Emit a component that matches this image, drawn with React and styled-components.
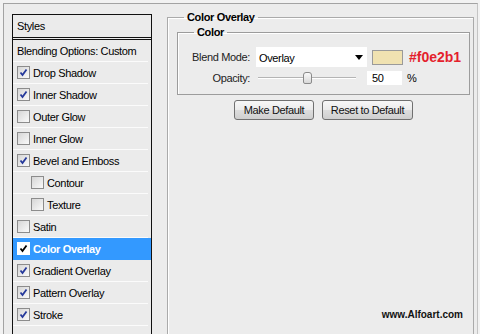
import styled, { createGlobalStyle } from "styled-components";

const GlobalStyle = createGlobalStyle`
    html, body {
        margin: 0;
        padding: 0;
        background: #f2f2f2;
        font-family: "Liberation Sans", Arial, sans-serif;
        font-size: 11px;
        letter-spacing: -0.35px;
        color: #000;
    }
`

let Dialog = styled.div`
    position: relative;
    margin: 3px 0 0 3px;
    width: 475px;
    height: 331px;
    box-sizing: border-box;
    border-top: 1px solid #a3a3a3;
    border-left: 1px solid #a3a3a3;
    border-right: 1px solid #c4c4c4;
    background: #ececec;
    display: flex;
    align-items: flex-start;
    overflow: hidden;
`

let StylePanel = styled.div`
    margin: 10px 0 0 8px;
    width: 140px;
    height: 340px;
    box-sizing: border-box;
    border: 1px solid #111;
    background: #ebebeb;
    flex-shrink: 0;
`

let PanelHeader = styled.div`
    height: 22px;
    line-height: 22px;
    padding-left: 4px;
    border-bottom: 3px double #111;
`

let Row = styled.div`
    display: flex;
    align-items: center;
    height: 21px;
    padding-left: ${p => p.$indent ? 18 : 4}px;
    border-bottom: 1px solid ${p => p.$active ? '#3399ff' : '#fbfbfb'};
    margin-right: ${p => p.$active ? 0 : 3}px;
    background: ${p => p.$active ? '#3399ff' : 'transparent'};
    color: ${p => p.$active ? '#fff' : '#000'};
    font-weight: ${p => p.$active ? 'bold' : 'normal'};
    white-space: nowrap;
`

let Box = styled.span`
    width: 11px;
    height: 11px;
    margin-right: 3px;
    border: 1px solid ${p => p.$active ? '#fff' : '#8c8c8c'};
    background: ${p => p.$active ? '#fff' : 'linear-gradient(135deg, #d6d6d6, #fafafa)'};
    display: inline-flex;
    align-items: center;
    justify-content: center;
    flex-shrink: 0;
`

let Settings = styled.fieldset`
    margin: 7px 3px 0 15px;
    padding: 0 3px 0 9px;
    flex: 1;
    height: 340px;
    border: 1px solid #aaa;
    box-shadow: inset 1px 1px 0 #fff;
    min-width: 0;
`

let Legend = styled.legend`
    margin-left: 7px;
    padding: 0 3px;
    font-weight: bold;
    line-height: 13px;
`

let ColorGroup = styled.fieldset`
    margin: 2px 0 0 0;
    padding: 8px 0 9px 0;
    border: 1px solid #9c9c9c;
    box-shadow: inset 1px 1px 0 #fff;
`

let SmallLegend = styled(Legend)`
    margin-left: 16px;
`

let FieldRow = styled.div`
    display: flex;
    align-items: center;
    height: ${p => p.$h}px;
    margin-top: ${p => p.$top || 0}px;
`

let Label = styled.label`
    width: 72px;
    text-align: right;
    margin-right: ${p => p.$gap}px;
    color: #222;
`

let Select = styled.div`
    width: 111px;
    height: 20px;
    box-sizing: border-box;
    background: #fff;
    display: flex;
    align-items: center;
    justify-content: space-between;
    padding: 1px 4px 0 3px;
`

let Arrow = styled.span`
    width: 0;
    height: 0;
    border-left: 4px solid transparent;
    border-right: 4px solid transparent;
    border-top: 5px solid #000;
`

let Swatch = styled.div`
    width: 29px;
    height: 13px;
    margin-left: 5px;
    border: 1px solid #9a9a9a;
    background: #f0e2b1;
`

let HexCode = styled.span`
    margin-left: 6px;
    color: #e41f2d;
    font-size: 14px;
    font-weight: bold;
    letter-spacing: 0;
`

let Slider = styled.div`
    position: relative;
    width: 98px;
    height: 14px;
    display: flex;
    align-items: center;
`

let Track = styled.div`
    width: 100%;
    height: 1px;
    background: #b4b4b4;
    border-bottom: 1px solid #fff;
`

let Thumb = styled.div`
    position: absolute;
    left: 45px;
    top: 1px;
    width: 9px;
    height: 12px;
    box-sizing: border-box;
    border: 1px solid #8a8a8a;
    border-radius: 3px 3px 2px 2px;
    background: linear-gradient(#fafafa, #d8d8d8);
`

let NumberBox = styled.div`
    width: 35px;
    height: 14px;
    margin-left: 11px;
    background: #fff;
    padding-left: 5px;
    box-sizing: border-box;
    line-height: 15px;
`

let Unit = styled.span`
    margin-left: 5px;
`

let Buttons = styled.div`
    display: flex;
    gap: 8px;
    margin: 5px 0 0 57px;
`

let Button = styled.button`
    width: ${p => p.$w}px;
    height: 20px;
    padding: 0;
    font-family: inherit;
    font-size: 11px;
    letter-spacing: -0.35px;
    color: #111;
    border: 1px solid #707070;
    border-radius: 3px;
    background: linear-gradient(#f7f7f7 0%, #ebebeb 50%, #dddddd 51%, #cfcfcf 100%);
`

let Watermark = styled.div`
    position: absolute;
    right: 14px;
    bottom: 14px;
    font-size: 10px;
    font-weight: bold;
    letter-spacing: 0;
    color: #111;
`

const effects = [
    { name: 'Drop Shadow', on: true },
    { name: 'Inner Shadow', on: true },
    { name: 'Outer Glow', on: false },
    { name: 'Inner Glow', on: false },
    { name: 'Bevel and Emboss', on: true },
    { name: 'Contour', on: false, sub: true },
    { name: 'Texture', on: false, sub: true },
    { name: 'Satin', on: false },
    { name: 'Color Overlay', on: true, active: true },
    { name: 'Gradient Overlay', on: true },
    { name: 'Pattern Overlay', on: true },
    { name: 'Stroke', on: true },
]

function Check({on, active}) {
    return (
        <Box $active={active}>
            {on ?
                <svg width="9" height="9" viewBox="0 0 9 9">
                    <path d="M1.5 4.5 L3.5 7 L7.5 1.5" fill="none" stroke={active ? '#000' : '#25399b'} strokeWidth="1.8" />
                </svg>
                : null}
        </Box>
    )
}

export default function App() {
    return (
        <>
            <GlobalStyle />
            <Dialog>
                <StylePanel>
                    <PanelHeader>Styles</PanelHeader>
                    <Row>Blending Options: Custom</Row>
                    {effects.map(e => (
                        <Row key={e.name} $indent={e.sub} $active={e.active}>
                            <Check on={e.on} active={e.active} />
                            {e.name}
                        </Row>
                    ))}
                </StylePanel>

                <Settings>
                    <Legend>Color Overlay</Legend>
                    <ColorGroup>
                        <SmallLegend>Color</SmallLegend>
                        <FieldRow $h={20}>
                            <Label $gap={6}>Blend Mode:</Label>
                            <Select>
                                Overlay
                                <Arrow />
                            </Select>
                            <Swatch />
                            <HexCode>#f0e2b1</HexCode>
                        </FieldRow>
                        <FieldRow $h={14} $top={4}>
                            <Label $gap={8}>Opacity:</Label>
                            <Slider>
                                <Track />
                                <Thumb />
                            </Slider>
                            <NumberBox>50</NumberBox>
                            <Unit>%</Unit>
                        </FieldRow>
                    </ColorGroup>
                    <Buttons>
                        <Button $w={80}>Make Default</Button>
                        <Button $w={91}>Reset to Default</Button>
                    </Buttons>
                </Settings>

                <Watermark>www.Alfoart.com</Watermark>
            </Dialog>
        </>
    )
}
